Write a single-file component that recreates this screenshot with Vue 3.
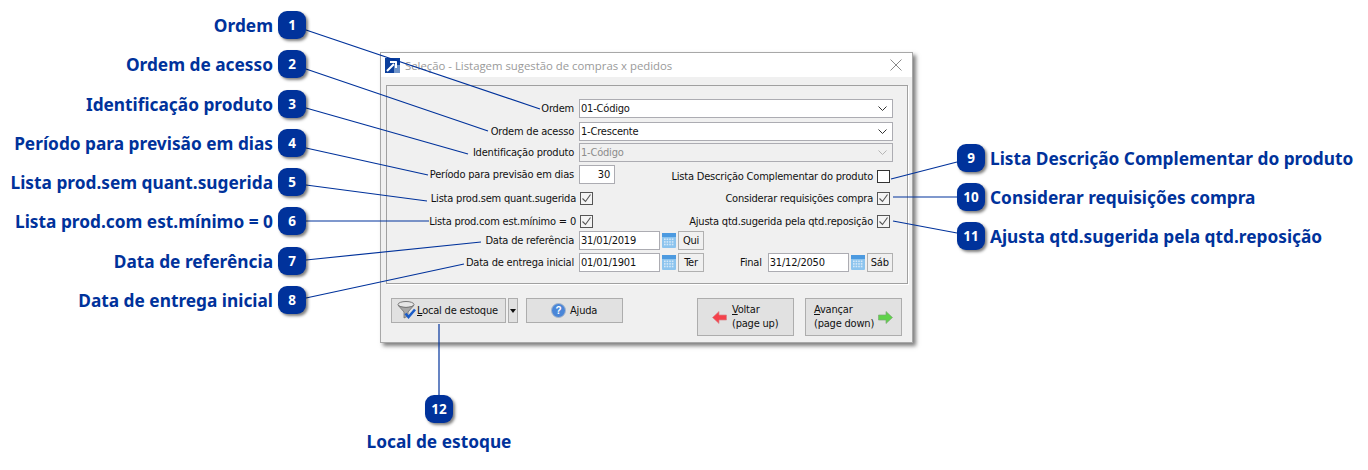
<script setup>
const leftCallouts = [
  { n: 1, t: 'Ordem' },
  { n: 2, t: 'Ordem de acesso' },
  { n: 3, t: 'Identificação produto' },
  { n: 4, t: 'Período para previsão em dias' },
  { n: 5, t: 'Lista prod.sem quant.sugerida' },
  { n: 6, t: 'Lista prod.com est.mínimo = 0' },
  { n: 7, t: 'Data de referência' },
  { n: 8, t: 'Data de entrega inicial' },
]
const rightCallouts = [
  { n: 9, t: 'Lista Descrição Complementar do produto' },
  { n: 10, t: 'Considerar requisições compra' },
  { n: 11, t: 'Ajusta qtd.sugerida pela qtd.reposição' },
]
const lines = [
  [306, 30, 540, 109], [306, 69, 488, 131], [306, 108, 468, 154], [306, 148, 428, 175],
  [306, 185, 427, 201], [306, 221, 429, 221], [306, 260, 481, 242], [306, 298, 464, 264],
  [891, 179, 957, 162], [893, 197, 957, 197], [893, 221, 957, 233], [439, 324, 439, 395],
]
const calCells = [0, 1, 2, 3]
</script>

<template>
  <div class="canvas">
    <div class="dialog">
      <div class="titlebar">
        <svg class="logo" width="15" height="15" viewBox="0 0 15 15">
          <rect width="15" height="15" fill="#0b3f9c" />
          <rect x="9" y="7" width="6" height="8" fill="#6f93c8" />
          <path d="M2 13 L9 6 M5 4 H11 V10" fill="none" stroke="#fff" stroke-width="2" />
        </svg>
        <span class="title">Seleção - Listagem sugestão de compras x pedidos</span>
        <svg class="close" width="12" height="12" viewBox="0 0 12 12">
          <path d="M.5 .5 L11.5 11.5 M11.5 .5 L.5 11.5" stroke="#8a8a8a" stroke-width="1" fill="none" />
        </svg>
      </div>

      <div class="group">
        <div class="row r1">
          <label class="lbl">Ordem</label>
          <div class="select"><span>01-Código</span><svg class="chev" width="9" height="5" viewBox="0 0 9 5"><path d="M.5 .5 L4.5 4.5 L8.5 .5" fill="none" stroke="#333" /></svg></div>
        </div>
        <div class="row r2">
          <label class="lbl">Ordem de acesso</label>
          <div class="select"><span>1-Crescente</span><svg class="chev" width="9" height="5" viewBox="0 0 9 5"><path d="M.5 .5 L4.5 4.5 L8.5 .5" fill="none" stroke="#333" /></svg></div>
        </div>
        <div class="row r3">
          <label class="lbl">Identificação produto</label>
          <div class="select disabled"><span>1-Código</span><svg class="chev" width="9" height="5" viewBox="0 0 9 5"><path d="M.5 .5 L4.5 4.5 L8.5 .5" fill="none" stroke="#b5b5b5" /></svg></div>
        </div>
        <div class="row r4">
          <label class="lbl">Período para previsão em dias</label>
          <div class="input num">30</div>
          <div class="right">
            <span>Lista Descrição Complementar do produto</span>
            <span class="check"></span>
          </div>
        </div>
        <div class="row r5">
          <label class="lbl chk">Lista prod.sem quant.sugerida</label>
          <span class="check on"><svg width="11" height="11" viewBox="0 0 11 11"><path d="M1.5 5.5 L4.5 8.5 L9.5 1.5" fill="none" stroke="#555" stroke-width="1.1" /></svg></span>
          <div class="right">
            <span>Considerar requisições compra</span>
            <span class="check on"><svg width="11" height="11" viewBox="0 0 11 11"><path d="M1.5 5.5 L4.5 8.5 L9.5 1.5" fill="none" stroke="#555" stroke-width="1.1" /></svg></span>
          </div>
        </div>
        <div class="row r6">
          <label class="lbl chk">Lista prod.com est.mínimo = 0</label>
          <span class="check on"><svg width="11" height="11" viewBox="0 0 11 11"><path d="M1.5 5.5 L4.5 8.5 L9.5 1.5" fill="none" stroke="#555" stroke-width="1.1" /></svg></span>
          <div class="right">
            <span>Ajusta qtd.sugerida pela qtd.reposição</span>
            <span class="check on"><svg width="11" height="11" viewBox="0 0 11 11"><path d="M1.5 5.5 L4.5 8.5 L9.5 1.5" fill="none" stroke="#555" stroke-width="1.1" /></svg></span>
          </div>
        </div>
        <div class="row r7">
          <label class="lbl">Data de referência</label>
          <div class="input date">31/01/2019</div>
          <svg class="cal" width="14" height="16" viewBox="0 0 14 16">
            <rect y="1" width="14" height="15" rx="1" fill="#8cc4ee" />
            <rect y="1" width="14" height="4" fill="#4c9ae0" />
            <g fill="#d4e8f8"><template v-for="i in calCells" :key="i"><rect :x="2 + i * 2.6" y="6.5" width="1.6" height="1.6" /><rect :x="2 + i * 2.6" y="9.1" width="1.6" height="1.6" /><rect :x="2 + i * 2.6" y="11.7" width="1.6" height="1.6" /></template></g>
          </svg>
          <div class="day">Qui</div>
        </div>
        <div class="row r8">
          <label class="lbl">Data de entrega inicial</label>
          <div class="input date">01/01/1901</div>
          <svg class="cal" width="14" height="16" viewBox="0 0 14 16">
            <rect y="1" width="14" height="15" rx="1" fill="#8cc4ee" />
            <rect y="1" width="14" height="4" fill="#4c9ae0" />
            <g fill="#d4e8f8"><template v-for="i in calCells" :key="i"><rect :x="2 + i * 2.6" y="6.5" width="1.6" height="1.6" /><rect :x="2 + i * 2.6" y="9.1" width="1.6" height="1.6" /><rect :x="2 + i * 2.6" y="11.7" width="1.6" height="1.6" /></template></g>
          </svg>
          <div class="day">Ter</div>
          <span class="final">Final</span>
          <div class="input date">31/12/2050</div>
          <svg class="cal" width="14" height="16" viewBox="0 0 14 16">
            <rect y="1" width="14" height="15" rx="1" fill="#8cc4ee" />
            <rect y="1" width="14" height="4" fill="#4c9ae0" />
            <g fill="#d4e8f8"><template v-for="i in calCells" :key="i"><rect :x="2 + i * 2.6" y="6.5" width="1.6" height="1.6" /><rect :x="2 + i * 2.6" y="9.1" width="1.6" height="1.6" /><rect :x="2 + i * 2.6" y="11.7" width="1.6" height="1.6" /></template></g>
          </svg>
          <div class="day">Sáb</div>
        </div>
      </div>

      <div class="footer">
        <div class="btn local">
          <svg width="20" height="19" viewBox="0 0 20 19">
            <ellipse cx="9" cy="3.5" rx="8" ry="3" fill="#e6e6e6" stroke="#777" />
            <path d="M1.3 4.5 L7 11 V17 L11 15 V11 L16.7 4.5 C13 7 5 7 1.3 4.5 Z" fill="#a8a8a8" stroke="#707070" stroke-width=".8" />
            <path d="M8.5 12.5 L11.5 16 L18 8.5" fill="none" stroke="#1a5cc8" stroke-width="2.6" />
          </svg>
          <span><u>L</u>ocal de estoque</span>
        </div>
        <div class="btn drop"><i class="tri"></i></div>
        <div class="btn help">
          <svg width="15" height="15" viewBox="0 0 15 15">
            <circle cx="7.5" cy="7.5" r="7" fill="#4a86d8" stroke="#a9b7c9" />
            <text x="7.5" y="11" text-anchor="middle" font-size="10" font-weight="700" font-family="Liberation Sans, sans-serif" fill="#fff">?</text>
          </svg>
          <span>A<u>j</u>uda</span>
        </div>
        <div class="btn nav back">
          <svg width="15" height="13" viewBox="0 0 15 13"><path d="M0.5 6.5 L7 .5 V4 H14.5 V9 H7 V12.5 Z" fill="#f5414b" stroke="#d8888c" stroke-width=".7" /></svg>
          <span class="two"><u>V</u>oltar<br />(page up)</span>
        </div>
        <div class="btn nav next">
          <span class="two"><u>A</u>vançar<br />(page down)</span>
          <svg class="ar" width="15" height="13" viewBox="0 0 15 13"><path d="M14.5 6.5 L8 .5 V4 H.5 V9 H8 V12.5 Z" fill="#5fd24a" stroke="#7fa878" stroke-width=".7" /></svg>
        </div>
      </div>
    </div>

    <svg class="leaders" width="1368" height="470" viewBox="0 0 1368 470">
      <line v-for="(l, i) in lines" :key="i" :x1="l[0]" :y1="l[1]" :x2="l[2]" :y2="l[3]" />
    </svg>

    <div class="callouts left">
      <div v-for="c in leftCallouts" :key="c.n" class="callout">
        <span class="ctext">{{ c.t }}</span>
        <span class="badge">{{ c.n }}</span>
      </div>
    </div>
    <div class="callouts rightc">
      <div v-for="c in rightCallouts" :key="c.n" class="callout">
        <span class="badge">{{ c.n }}</span>
        <span class="ctext">{{ c.t }}</span>
      </div>
    </div>
    <div class="bottomc">
      <span class="badge">12</span>
      <span class="ctext">Local de estoque</span>
    </div>
  </div>
</template>

<style>
html, body { margin: 0; background: #fff; }
</style>

<style scoped>
.canvas {
  position: relative;
  width: 1368px;
  height: 470px;
  overflow: hidden;
  background: #fff;
}
.dialog {
  position: absolute;
  left: 380px;
  top: 52px;
  width: 533px;
  height: 291px;
  box-sizing: border-box;
  border: 1px solid #a8a8a8;
  background: #f0f0f0;
  box-shadow: 3px 3px 4px rgba(0, 0, 0, .5);
  font-family: "DejaVu Sans", sans-serif;
  font-stretch: condensed;
  font-size: 11px;
  letter-spacing: -.2px;
  color: #111;
}
.titlebar {
  height: 24px;
  background: #fff;
  display: flex;
  align-items: center;
  padding: 0 10px 0 4px;
}
.title {
  margin-left: 5px;
  font-family: "Open Sans", sans-serif;
  font-stretch: normal;
  letter-spacing: 0;
  font-size: 11.35px;
  color: #9a9a9a;
}
.close { margin-left: auto; }
.group {
  margin: 8px 4px 0 5px;
  width: 522px;
  height: 199px;
  box-sizing: border-box;
  border: 1px solid #a0a0a0;
  box-shadow: 1px 1px 0 #fff;
  padding: 13px 14px 0 0;
  display: grid;
  grid-template-columns: minmax(0, 1fr);
  grid-template-rows: 23px 21px 22px 24px 23px 19px 22px 19px;
}
.row { display: flex; align-items: flex-start; height: 19px; }
.lbl {
  width: 187px;
  flex: none;
  text-align: right;
  line-height: 19px;
  margin-right: 5px;
}
.chk { margin-right: 4px; width: 189px; }
.select {
  flex: 1;
  height: 19px;
  box-sizing: border-box;
  border: 1px solid #acacb2;
  background: #fff;
  display: flex;
  align-items: center;
  justify-content: space-between;
  padding: 0 5px 0 1px;
  line-height: 17px;
}
.select.disabled { background: #f0f0f0; color: #8c8c8c; }
.input {
  box-sizing: border-box;
  height: 19px;
  border: 1px solid #acacb2;
  background: #fff;
  line-height: 17px;
  padding: 0 1px;
}
.num { width: 36px; text-align: right; padding-right: 4px; }
.date { width: 81px; }
.cal { margin: 1px 2px 0 2px; flex: none; }
.day {
  box-sizing: border-box;
  width: 26px;
  height: 19px;
  border: 1px solid #b0b0b0;
  background: #f0f0f0;
  text-align: center;
  line-height: 17px;
}
.final { margin: 0 6px 0 36px; line-height: 19px; }
.right {
  margin-left: auto;
  display: flex;
  align-items: center;
  height: 19px;
  gap: 4px;
  padding-right: 3px;
}
.r4 .right { margin-top: 2px; }
.check {
  box-sizing: border-box;
  width: 13px;
  height: 13px;
  flex: none;
  border: 1px solid #333;
  background: #fff;
  display: flex;
  align-items: center;
  justify-content: center;
}
.check.on { border-color: #555; background: #f4f4f4; }
.r5 > .check, .r6 > .check { margin-top: 3px; }
.footer {
  display: flex;
  align-items: flex-start;
  margin-top: 14px;
  padding: 0 10px;
}
.btn {
  box-sizing: border-box;
  border: 1px solid #adadad;
  background: #e1e1e1;
  display: flex;
  align-items: center;
}
.local { width: 115px; height: 25px; padding-left: 5px; gap: 0; }
.drop { width: 10px; height: 25px; margin-left: 2px; justify-content: center; }
.tri { width: 0; height: 0; border: 3.5px solid transparent; border-top: 4px solid #111; border-bottom: 0; }
.help { width: 97px; height: 25px; margin-left: 8px; padding-left: 24px; gap: 4px; }
.nav { width: 97px; height: 38px; }
.back { margin-left: auto; padding-left: 14px; gap: 5px; }
.next { margin-left: 11px; padding-left: 8px; padding-right: 8px; }
.ar { margin-left: auto; }
.two { line-height: 14px; white-space: nowrap; }
.leaders {
  position: absolute;
  left: 0;
  top: 0;
  pointer-events: none;
}
.leaders line { stroke: #00329b; stroke-width: 1.2; }
.callouts {
  position: absolute;
  display: flex;
  flex-direction: column;
}
.left { right: calc(1368px - 306px); top: 11px; gap: 11.3px; align-items: flex-end; }
.rightc { left: 957px; top: 144px; gap: 11px; align-items: flex-start; }
.callout { display: flex; align-items: center; gap: 5px; height: 28px; }
.bottomc {
  position: absolute;
  left: 339px;
  width: 200px;
  top: 395px;
  display: flex;
  flex-direction: column;
  align-items: center;
  gap: 6px;
}
.badge {
  width: 28px;
  height: 28px;
  flex: none;
  border-radius: 9px;
  background: #00329b;
  box-shadow: 2px 2px 3px rgba(0, 0, 0, .5);
  color: #fff;
  font-family: "Open Sans", sans-serif;
  font-weight: 700;
  font-size: 13.5px;
  display: flex;
  align-items: center;
  justify-content: center;
}
.ctext {
  font-family: "Noto Sans", sans-serif;
  font-weight: 700;
  font-size: 17.3px;
  color: #00329b;
  white-space: nowrap;
  line-height: 22px;
  padding-top: 2px;
}
</style>
